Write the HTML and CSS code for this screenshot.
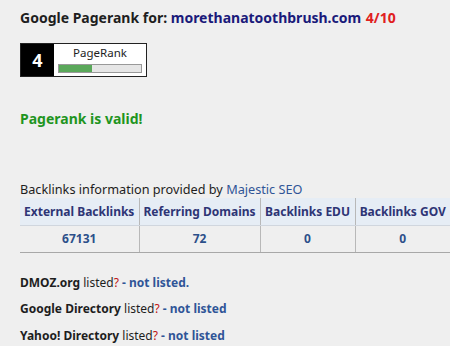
FILE: index.html
```html
<!DOCTYPE html>
<html>
<head>
<meta charset="utf-8">
<link rel="stylesheet" href="styles.css">
</head>
<body>
<div class="page">
  <h1 class="title">Google Pagerank for: <span class="domain">morethanatoothbrush.com</span> <span class="score">4/10</span></h1>
  <div class="badge">
    <div class="badge-num">4</div>
    <div class="badge-body">
      <div class="badge-label">PageRank</div>
      <div class="bar"><div class="bar-fill" style="width:40%"></div></div>
    </div>
  </div>
  <p class="valid">Pagerank is valid!</p>
  <p class="provided">Backlinks information provided by <span class="link">Majestic SEO</span></p>
  <table class="bl">
    <thead>
      <tr><th class="c1">External Backlinks</th><th class="c2">Referring Domains</th><th class="c3">Backlinks EDU</th><th class="c4">Backlinks GOV</th></tr>
    </thead>
    <tbody>
      <tr><td>67131</td><td>72</td><td>0</td><td>0</td></tr>
    </tbody>
  </table>
  <ul class="dirs">
    <li><b>DMOZ.org</b> listed<span class="q">?</span> <span class="nl">- not listed.</span></li>
    <li><b>Google Directory</b> listed<span class="q">?</span> <span class="nl">- not listed</span></li>
    <li><b>Yahoo! Directory</b> listed<span class="q">?</span> <span class="nl">- not listed</span></li>
  </ul>
</div>
</body>
</html>
```
FILE: styles.css
```css
html, body {
  margin: 0;
  padding: 0;
  background: #efefef;
  overflow: hidden;
}
body {
  font-family: "Noto Sans", "Open Sans", sans-serif;
  color: #1e1e1e;
}
.page {
  padding: 8px 0 0 20px;
  width: 430px;
}
.title {
  margin: 0;
  font-size: 14px;
  font-weight: 700;
  line-height: 20px;
  white-space: nowrap;
}
.domain { color: #1a1a7a; }
.score { color: #e02020; margin-left: 1px; }
.badge {
  margin-top: 15px;
  display: flex;
  width: 125px;
  height: 32px;
  border: 1px solid #222;
  background: #fff;
}
.badge-num {
  width: 33px;
  background: #000;
  color: #fff;
  font-weight: 700;
  font-size: 18px;
  display: flex;
  align-items: center;
  justify-content: center;
}
.badge-body {
  flex: 1;
  padding: 2px 4px 0 4px;
}
.badge-label {
  font-size: 11.5px;
  line-height: 14px;
  text-align: center;
}
.bar {
  margin-top: 4px;
  height: 7px;
  border: 1px solid #999;
  background: #e6e6e6;
}
.bar-fill {
  height: 100%;
  background: #5aa85a;
}
.valid {
  margin: 32px 0 0 0;
  color: #1f951f;
  font-weight: 700;
  font-size: 14px;
  line-height: 20px;
}
.provided {
  margin: 52px 0 0 0;
  font-size: 12.7px;
  line-height: 16px;
}
.link { color: #2f5597; }
.bl {
  border-collapse: collapse;
  table-layout: fixed;
  width: 430px;
  margin-top: 1px;
  font-size: 12px;
  font-weight: 700;
  white-space: nowrap;
}
.bl th, .bl td {
  box-sizing: border-box;
  padding: 0;
  text-align: center;
  height: 27px;
  border-left: 1px solid #b8b8b8;
}
.bl th {
  background: #e6edf5;
  color: #2e3575;
  border-bottom: 1px solid #d0d6de;
}
.bl th:first-child, .bl td:first-child { border-left: none; }
.bl td {
  color: #2c4f8a;
  border-bottom: 1px solid #a8a8a8;
}
.c1 { width: 119px; }
.c2 { width: 121px; }
.c3 { width: 95px; }
.c4 { width: 95px; }
.dirs {
  list-style: none;
  margin: 22px 0 0 0;
  padding: 0;
  font-size: 12px;
  line-height: 16px;
}
.dirs li { margin-bottom: 10.5px; }
.dirs b { font-weight: 700; }
.q { color: #c01010; }
.nl { color: #2f5597; font-weight: 700; }
```
